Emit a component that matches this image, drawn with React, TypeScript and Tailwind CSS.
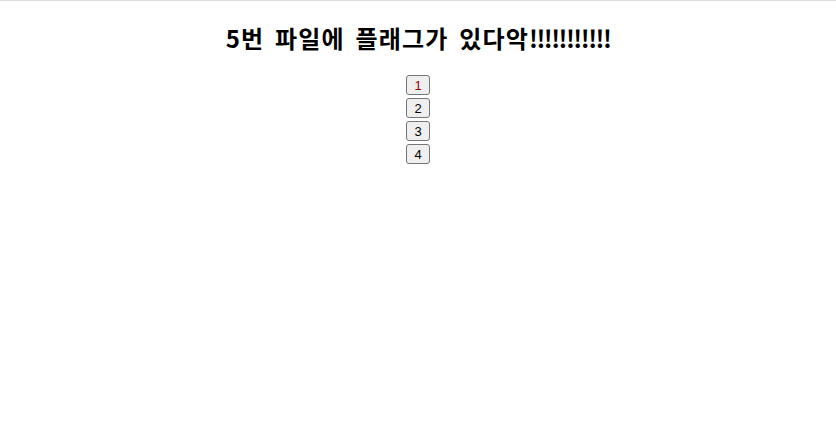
import React from "react";

function NumButton({ label, red }: { label: string; red?: boolean }) {
  return (
    <button
      className={
        "w-[24px] h-[20px] border border-[#767676] rounded-[3px] bg-[#efefef] text-[13px] leading-none flex items-center justify-center font-['Liberation_Sans',sans-serif] " +
        (red ? "text-[#990000]" : "text-black")
      }
    >
      {label}
    </button>
  );
}

export default function App() {
  return (
    <div className="min-h-[438px] bg-white border-t border-[#dcdcdc] flex flex-col items-center font-['Noto_Sans_CJK_KR','Noto_Sans',sans-serif]">
      <h2 className="mt-[21px] text-[24px] font-bold leading-[32px] text-black">
        <span className="tracking-[1.2px] [word-spacing:4px]">5번 파일에 플래그가 있다악</span>
        <span className="tracking-[-1.5px]">!!!!!!!!!!!</span>
      </h2>
      <div className="mt-[21px] flex flex-col items-center gap-[3px]">
        <NumButton label="1" red />
        <NumButton label="2" />
        <NumButton label="3" />
        <NumButton label="4" />
      </div>
    </div>
  );
}
